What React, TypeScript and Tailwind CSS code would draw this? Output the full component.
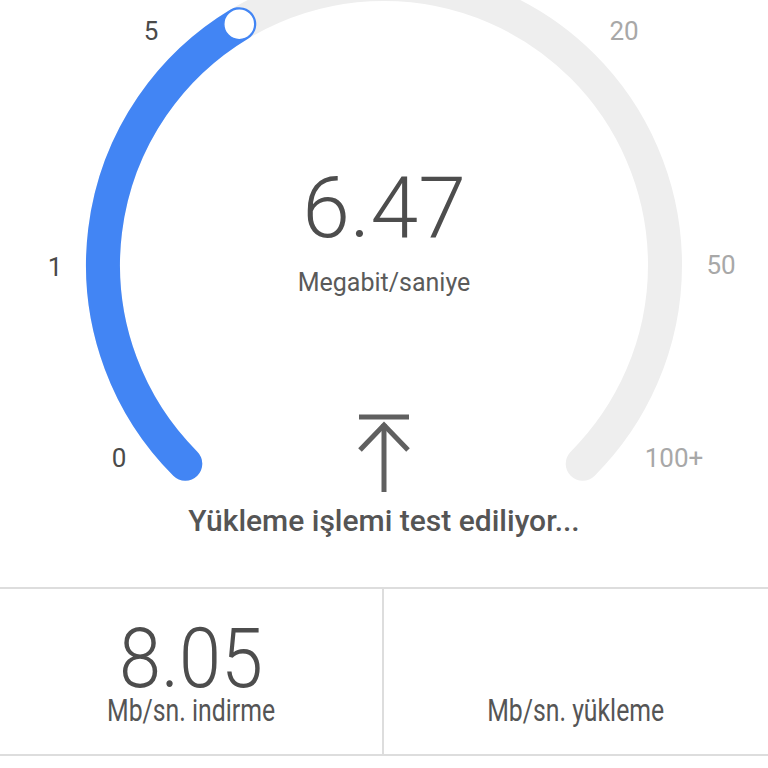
const CX = 384
const CY = 265
const R = 281

function pt(deg: number) {
  // deg measured clockwise from top
  const a = (deg * Math.PI) / 180
  return [CX + R * Math.sin(a), CY - R * Math.cos(a)]
}

function Gauge() {
  const [sx, sy] = pt(-135)
  const [ex, ey] = pt(135)
  const [bx, by] = pt(-31)
  return (
    <svg className="absolute inset-0" width="768" height="587" viewBox="0 0 768 587">
      <path
        d={`M ${sx} ${sy} A ${R} ${R} 0 1 1 ${ex} ${ey}`}
        fill="none"
        stroke="#eeeeee"
        strokeWidth="34"
        strokeLinecap="round"
      />
      <path
        d={`M ${sx} ${sy} A ${R} ${R} 0 0 1 ${bx} ${by}`}
        fill="none"
        stroke="#4285f4"
        strokeWidth="34"
        strokeLinecap="round"
      />
      <circle cx={bx} cy={by} r="15.5" fill="#ffffff" stroke="#4285f4" strokeWidth="1.5" />
      <g fontFamily="Roboto, 'Noto Sans', sans-serif" fontSize="26" textAnchor="middle">
        <text x="151" y="40" fill="#4a4a4a">5</text>
        <text x="55" y="276" fill="#4a4a4a">1</text>
        <text x="119" y="467" fill="#4a4a4a">0</text>
        <text x="624" y="40" fill="#a8a8a8">20</text>
        <text x="721" y="274" fill="#a8a8a8">50</text>
        <text x="674" y="467" fill="#a8a8a8">100+</text>
      </g>
    </svg>
  )
}

function Stat({ value, label }: { value?: string; label: string }) {
  return (
    <div className="flex flex-col items-center pt-[34px]">
      <div className="h-[72px] text-[84px] leading-[72px] font-light text-[#4d4d4d] scale-x-[0.9]">{value}</div>
      <div className="text-[31px] leading-none text-[#555555] scale-x-[0.8]">{label}</div>
    </div>
  )
}

export default function App() {
  return (
    <div className="w-[768px] h-[768px] bg-white overflow-hidden" style={{ fontFamily: 'Roboto, "Noto Sans", sans-serif' }}>
      <section className="relative h-[587px]">
        <Gauge />
        <div className="relative flex flex-col items-center pt-[160px]">
          <div className="text-[86px] leading-none font-light text-[#4d4d4d] h-[96px] flex items-center">6.47</div>
          <div className="text-[25px] text-[#5a5a5a] mt-[8px]">Megabit/saniye</div>
          <svg className="mt-[112px]" width="54" height="78" viewBox="0 0 54 78">
            <g stroke="#606060" strokeWidth="5" fill="none">
              <line x1="2" y1="3" x2="52" y2="3" />
              <line x1="27" y1="10" x2="27" y2="78" />
              <polyline points="3,36 27,11 51,36" />
            </g>
          </svg>
          <div className="text-[30px] font-medium text-[#555555] mt-[6px]">Yükleme işlemi test ediliyor...</div>
        </div>
      </section>
      <section className="grid grid-cols-2 h-[169px] border-y-2 border-[#dddddd]">
        <div className="border-r-2 border-[#dddddd]">
          <Stat value="8.05" label="Mb/sn. indirme" />
        </div>
        <Stat label="Mb/sn. yükleme" />
      </section>
    </div>
  )
}
